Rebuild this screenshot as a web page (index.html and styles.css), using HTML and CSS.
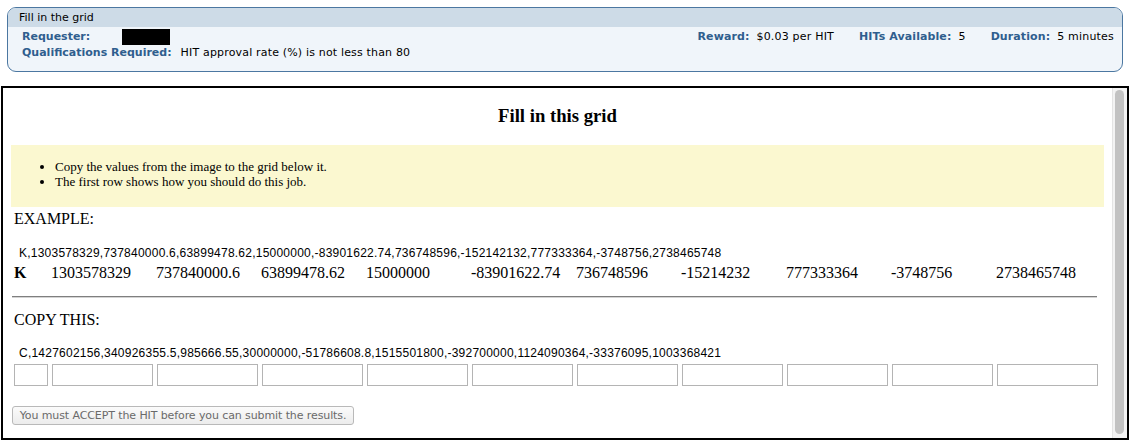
FILE: index.html
```html
<!DOCTYPE html>
<html>
<head>
<meta charset="utf-8">
<link rel="stylesheet" href="styles.css">
</head>
<body>
<div class="hit-box">
  <div class="hit-title">Fill in the grid</div>
  <div class="hit-body">
    <div class="hit-row">
      <div class="hit-left">
        <span class="lbl">Requester:</span>
        <span class="redact"></span>
      </div>
      <div class="hit-right">
        <span class="pair"><span class="lbl">Reward:</span><span class="val">$0.03 per HIT</span></span>
        <span class="pair"><span class="lbl">HITs Available:</span><span class="val">5</span></span>
        <span class="pair"><span class="lbl">Duration:</span><span class="val">5 minutes</span></span>
      </div>
    </div>
    <div class="hit-row">
      <div class="hit-left">
        <span class="lbl">Qualifications Required:</span>
        <span class="qual">HIT approval rate (%) is not less than 80</span>
      </div>
    </div>
  </div>
</div>

<div class="frame">
  <div class="content">
    <h1 class="page-title">Fill in this grid</h1>
    <div class="instructions">
      <ul>
        <li>Copy the values from the image to the grid below it.</li>
        <li>The first row shows how you should do this job.</li>
      </ul>
    </div>
    <div class="section">
      <div class="sec-label example-label">EXAMPLE:</div>
      <div class="csv csv-example">K,1303578329,737840000.6,63899478.62,15000000,-83901622.74,736748596,-152142132,777333364,-3748756,2738465748</div>
      <div class="grid values">
        <span class="first">K</span>
        <span>1303578329</span>
        <span>737840000.6</span>
        <span>63899478.62</span>
        <span>15000000</span>
        <span>-83901622.74</span>
        <span>736748596</span>
        <span>-15214232</span>
        <span>777333364</span>
        <span>-3748756</span>
        <span>2738465748</span>
      </div>
      <hr class="divider">
      <div class="sec-label copy-label">COPY THIS:</div>
      <div class="csv csv-copy">C,1427602156,340926355.5,985666.55,30000000,-51786608.8,1515501800,-392700000,1124090364,-33376095,1003368421</div>
      <div class="grid inputs">
        <input type="text">
        <input type="text">
        <input type="text">
        <input type="text">
        <input type="text">
        <input type="text">
        <input type="text">
        <input type="text">
        <input type="text">
        <input type="text">
        <input type="text">
      </div>
      <button class="submit" type="button">You must ACCEPT the HIT before you can submit the results.</button>
    </div>
  </div>
  <div class="scrollbar"><div class="thumb"></div></div>
</div>
</body>
</html>
```

FILE: styles.css
```css
html, body {
  margin: 0;
  padding: 0;
  background: #fff;
}
body {
  font-family: "Liberation Serif", "Times New Roman", serif;
  color: #000;
}

/* ---------- HIT summary box ---------- */
.hit-box {
  margin: 7px 7px 0 7px;
  border: 1px solid #4b77a1;
  border-radius: 9px;
  overflow: hidden;
  background: #f0f5fa;
  font-family: "DejaVu Sans", Verdana, sans-serif;
  font-size: 11px;
  height: 63px;
}
.hit-title {
  background: #cddbe7;
  height: 19px;
  line-height: 19px;
  padding-left: 11px;
  color: #000;
}
.hit-body {
  padding: 2px 8px 0 14px;
}
.hit-row {
  display: flex;
  justify-content: space-between;
  height: 16px;
  line-height: 16px;
}
.hit-left {
  display: flex;
  align-items: center;
}
.lbl {
  color: #2f5e8e;
  font-weight: bold;
}
.redact {
  display: inline-block;
  width: 48px;
  height: 16px;
  background: #000;
  margin-left: 32px;
}
.qual {
  margin-left: 9px;
  letter-spacing: 0.17px;
}
.hit-right {
  display: flex;
  gap: 25px;
}
.hit-right .lbl {
  letter-spacing: 0.1px;
}
.pair .val {
  margin-left: 7px;
  letter-spacing: 0.2px;
}

/* ---------- Frame ---------- */
.frame {
  margin: 14px 1px 0 1px;
  border: 2px solid #000;
  height: 350px;
  display: flex;
  overflow: hidden;
}
.content {
  flex: 1;
  padding: 17px 8px 0 8px;
}
.page-title {
  margin: 0;
  font-size: 18.7px;
  line-height: 22px;
  font-weight: bold;
  text-align: center;
}
.instructions {
  margin-top: 18px;
  background: #fbf8d0;
  height: 62px;
  box-sizing: border-box;
  padding-top: 14px;
}
.instructions ul {
  margin: 0;
  padding-left: 44px;
  font-size: 13px;
  line-height: 15px;
}
.section {
  padding-left: 3px;
}
.sec-label {
  font-size: 16px;
  line-height: 18px;
}
.example-label {
  margin-top: 3px;
}
.csv {
  font-family: "Liberation Sans", Arial, sans-serif;
  font-size: 12px;
  line-height: 14px;
  letter-spacing: 0.23px;
  padding-left: 5px;
}
.csv-example {
  margin-top: 18px;
}
.grid {
  display: grid;
  grid-template-columns: 34px repeat(10, 101px);
  column-gap: 4px;
}
.values {
  margin-top: 4px;
  font-size: 16px;
  line-height: 18px;
}
.values span {
  margin-left: -1px;
}
.values .first {
  margin-left: 0;
  font-weight: bold;
}
.divider {
  margin: 14px 0 0 -2px;
  width: 1085px;
  border: 0;
  border-top: 1px solid #7f7f7f;
  border-bottom: 1px solid #d4d4d4;
  height: 0;
}
.copy-label {
  margin-top: 13px;
}
.csv-copy {
  margin-top: 17px;
}
.inputs {
  margin-top: 4px;
}
.inputs input {
  box-sizing: border-box;
  width: 100%;
  height: 22px;
  margin: 0;
  padding: 0;
  border: 1px solid #b4b4b4;
  background: #fff;
}
.submit {
  display: block;
  margin: 20px 0 0 -2px;
  height: 19px;
  width: 342px;
  padding: 0;
  border: 1px solid #b9b9b9;
  border-radius: 3px;
  background: linear-gradient(#fbfbfb, #ececec);
  color: #6a6a6a;
  font-family: "DejaVu Sans", "Lucida Grande", sans-serif;
  font-size: 11px;
  line-height: 17px;
  letter-spacing: -0.1px;
}

/* ---------- Scrollbar ---------- */
.scrollbar {
  width: 15px;
  background: #f3f3f3;
  border-left: 1px solid #e4e4e4;
  box-sizing: border-box;
  padding: 2px 3px 4px 2px;
}
.thumb {
  height: 100%;
  background: #c2c2c2;
  border-radius: 5px;
}
```
